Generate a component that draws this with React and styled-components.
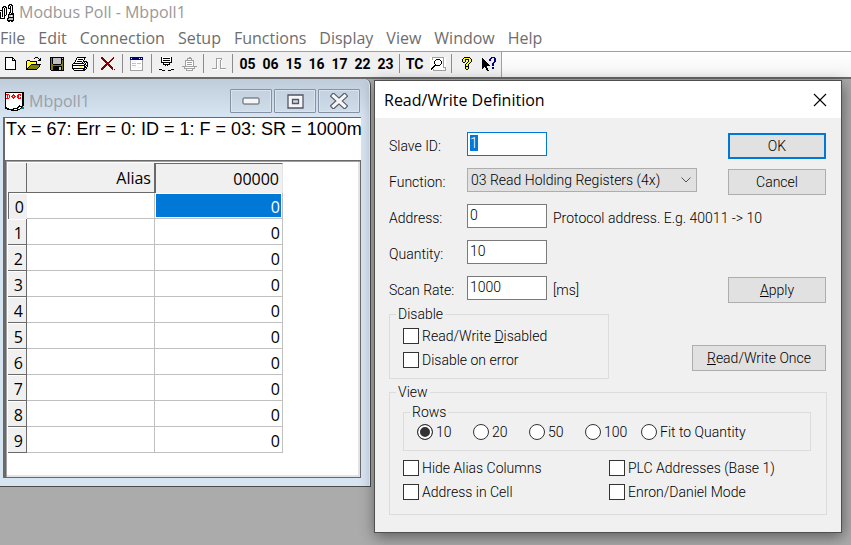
import React, { useState } from 'react'
import styled, { createGlobalStyle, css } from 'styled-components'

const GlobalStyle = createGlobalStyle`
    * {
        box-sizing: border-box;
    }
    body {
        margin: 0;
        font-family: "Open Sans", "Noto Sans", sans-serif;
        font-size: 16px;
        color: #000;
    }
    button, input, select {
        font: inherit;
        color: inherit;
    }
`

const Page = styled.div`
    display: flex;
    flex-direction: column;
    min-height: 100vh;
    background: #fff;
    overflow: hidden;
`

const TitleBar = styled.header`
    display: flex;
    align-items: center;
    gap: 5px;
    height: 25px;
    color: #999;
`

const AppTitle = styled.h1`
    margin: 0;
    font-size: 16px;
    font-weight: 400;
    line-height: 22px;
    padding-bottom: 2px;
`

const MenuBar = styled.nav`
    display: flex;
    gap: 13px;
    height: 26px;
`

const MenuItem = styled.button`
    padding: 0;
    border: 0;
    background: none;
    color: #6d6d6d;
    line-height: 26px;
`

const ToolStrip = styled.div`
    display: flex;
    border-top: 1px solid #a0a0a0;
    background: linear-gradient(#fff, #f4f4f4);
`

const Toolbar = styled.div`
    display: flex;
    align-items: center;
    height: 25px;
    margin-left: -1px;
    padding-bottom: 2px;
    border-right: 1px solid #a0a0a0;
    background: #f0f0f0;
`

const ToolButton = styled.button`
    display: flex;
    align-items: center;
    justify-content: center;
    width: 23px;
    height: 22px;
    padding: 0;
    border: 0;
    background: none;
    font-family: Roboto, sans-serif;
    font-size: 14px;
    font-weight: 700;
`

const Separator = styled.span`
    width: 1px;
    height: 19px;
    margin: 0 3px 0 2px;
    background: #8c8c8c;
`

const Workspace = styled.main`
    position: relative;
    flex: 1;
    border-top: 2px solid #696969;
    background: #ababab;
`

const ChildWindow = styled.section`
    position: absolute;
    left: 0;
    top: 0;
    width: 371px;
    padding: 0 9px 8px 3px;
    border: solid #4c4c4c;
    border-width: 0 1px 1px 0;
    border-radius: 0 6px 0 0;
    background: linear-gradient(#bfcddb, #d7e4f2 38px);
    box-shadow: inset -1px 0 0 #eef4fa;
`

const ChildTitleBar = styled.div`
    display: flex;
    align-items: center;
    height: 38px;
    padding: 6px 1px 0 2px;
`

const ChildTitle = styled.h2`
    flex: 1;
    margin: 0 0 0 5px;
    font-size: 16px;
    font-weight: 400;
    color: #98a1aa;
`

const CaptionButtons = styled.div`
    display: flex;
    gap: 2px;
`

const CaptionButton = styled.button`
    display: flex;
    align-items: center;
    justify-content: center;
    width: 42px;
    height: 24px;
    padding: 0;
    border: 1px solid #8592a3;
    border-radius: 1px;
    background: linear-gradient(#c3d1e0, #cfdcea);
    box-shadow: inset 0 0 0 1px #d9e4ef;
`

const ChildClient = styled.div`
    border: solid #696969;
    border-width: 1px 0 1px 2px;
    background: #fff;
`

const StatusLine = styled.p`
    height: 42px;
    margin: 0;
    padding-left: 1px;
    font-family: "Liberation Sans", Arial, sans-serif;
    font-size: 18px;
    line-height: 22px;
    white-space: nowrap;
`

const GridFrame = styled.div`
    height: 317px;
    padding: 2px 0 0 2px;
    border: solid #696969;
    border-width: 1px 1px 0 1px;
    box-shadow: inset 1px 1px 0 #a0a0a0, inset -2px -2px 0 #e3e3e3;
`

const Registers = styled.table`
    width: 275px;
    table-layout: fixed;
    border-collapse: separate;
    border-spacing: 0;
    text-align: right;
`

const Col = styled.col`
    width: ${(props) => props.$width}px;
`

const HeadCell = styled.th`
    height: 30px;
    padding: 0 3px;
    border: solid #696969;
    border-width: 0 1px 1px 0;
    background: #f0f0f0;
    font-weight: 400;
    line-height: 24px;
    ${(props) => props.$active && css`
        border-width: 1px 0 0 1px;
        border-right: 1px solid #e3e3e3;
    `}
`

const RowHead = styled.th`
    height: 26px;
    padding: 2px 3px 0 0;
    border: solid #696969;
    border-width: 0 1px 1px 0;
    background: #f0f0f0;
    box-shadow: inset 0 1px 0 #fff;
    font-weight: 400;
    line-height: 22px;
    ${(props) => props.$active && css`
        border-width: 0 0 0 1px;
    `}
`

const Cell = styled.td`
    height: 26px;
    padding: 2px 2px 0;
    border: solid #c0c0c0;
    border-width: 0 1px 1px 0;
    line-height: 22px;
    ${(props) => props.$selected && css`
        background: #0078d7;
        box-shadow: inset 0 0 0 1px #fff;
        color: #fff;
    `}
`

const Dialog = styled.section`
    position: absolute;
    left: 374px;
    top: 1px;
    width: 468px;
    border: 1px solid #4f4f4f;
    background: #f0f0f0;
    box-shadow: 1px 4px 14px rgba(0, 0, 0, 0.45);
`

const DialogTitleBar = styled.div`
    display: flex;
    align-items: center;
    justify-content: space-between;
    height: 37px;
    padding: 0 14px 0 9px;
    background: #fff;
`

const DialogTitle = styled.h2`
    margin: 0;
    font-size: 16px;
    font-weight: 400;
`

const CloseButton = styled.button`
    display: flex;
    padding: 0;
    border: 0;
    background: none;
`

const DialogBody = styled.form`
    padding: 8px 14px 17px;
    font-family: Roboto, sans-serif;
    font-size: 14px;
    font-weight: 300;
    line-height: 16px;
`

const FormRow = styled.div`
    display: flex;
    align-items: center;
    height: 36px;
`

const FieldLabel = styled.label`
    width: 78px;
    padding-top: 4px;
`

const TextBox = styled.input`
    width: 80px;
    height: 24px;
    padding: 0 2px 3px;
    border: 1px solid #7a7a7a;
    background: #fff;
    outline: 0;
    &:focus {
        border-color: #0078d7;
    }
    &::selection {
        background: #0078d7;
        color: #fff;
    }
`

const SelectBox = styled.div`
    display: grid;
    align-items: center;
    width: 230px;
    height: 24px;
    border: 1px solid #adadad;
    background: #e1e1e1;
    > * {
        grid-area: 1 / 1;
    }
    svg {
        justify-self: end;
        margin-right: 5px;
        pointer-events: none;
    }
`

const Select = styled.select`
    appearance: none;
    width: 100%;
    padding: 0 3px;
    border: 0;
    background: none;
    outline: 0;
`

const Note = styled.span`
    padding: 4px 0 0 6px;
`

const PushButton = styled.button`
    width: ${(props) => (props.$wide ? 134 : 98)}px;
    height: 26px;
    margin: 4px 1px 0 auto;
    padding: 0;
    border: ${(props) => (props.$primary ? '2px solid #0078d7' : '1px solid #adadad')};
    background: #e1e1e1;
`

const DisableRow = styled.div`
    display: flex;
    align-items: flex-end;
    margin-bottom: 5px;
`

const ButtonSlot = styled.div`
    margin-left: auto;
    padding-bottom: 8px;
`

const Group = styled.fieldset`
    width: ${(props) => props.$width || 'auto'};
    min-width: 0;
    margin: 0;
    padding: 0;
    border: 1px solid #dcdcdc;
`

const Legend = styled.legend`
    height: 16px;
    margin-left: 6px;
    padding: 0 2px;
`

const GroupBody = styled.div`
    padding: ${(props) => props.$padding};
`

const Radios = styled.div`
    display: grid;
    grid-template-columns: repeat(4, 56px) 1fr;
    padding: 0 13px 6px;
`

const Checks = styled.div`
    display: grid;
    grid-template-columns: ${(props) => (props.$columns === 2 ? '206px 1fr' : '1fr')};
    padding-top: ${(props) => (props.$columns === 2 ? 5 : 0)}px;
`

const Choice = styled.label`
    display: flex;
    align-items: center;
    gap: 3px;
    height: 24px;
    white-space: nowrap;
`

const CheckBox = styled.input`
    appearance: none;
    width: 16px;
    height: 16px;
    margin: 0;
    border: 1px solid #333;
    background: #fff;
    &:checked {
        box-shadow: inset 0 0 0 3px #fff;
        background: #333;
    }
`

const Radio = styled(CheckBox)`
    border-radius: 50%;
    &:checked {
        box-shadow: inset 0 0 0 2px #fff;
    }
`

const palette = {
    k: '#000', w: '#fff', y: '#ffff00', o: '#808000', g: '#c0c0c0', d: '#a0a0a0',
    r: '#800000', R: '#ff0000', b: '#000080', t: '#008080', l: '#f0f0f0',
}

const PixelIcon = ({ rows }) => {
    const width = Math.max(...rows.map((row) => row.length))
    return (
        <svg width={width} height={rows.length} shapeRendering="crispEdges" aria-hidden="true">
            {rows.map((row, y) => [...row].map((c, x) => (
                palette[c] && <rect key={`${x}-${y}`} x={x} y={y} width="1" height="1" fill={palette[c]} />
            )))}
        </svg>
    )
}

const icons = {
    app: [
        '.........kkk..',
        '........kkwkk.',
        '...kkk..kwkwk.',
        '..kkwkk.kwkwk.',
        '..kwkwk.kkkwk.',
        '..kwkwk...kwk.',
        'kkkwkwk...kwk.',
        'wwkwkwk...kwk.',
        'kwkwkwk..kkwk.',
        'kwkwkwk..kwkkk',
        'kwkwkwk.kkkkkk',
        'kwkwkk..kggwgk',
        'kwkwk...kggwgk',
        'kwwwk...kkkkkk',
        'kkkkk..kkggggk',
        '.......kgggggk',
        '.......kkkkkkk',
        '........kk.kk.',
    ],
    doc: [
        'kkkkkkkkkkkkkkkkkkk',
        'kwwwwwwwwwwwwwwwwkk',
        'kRRRwwwwRwwwwRRRwkk',
        'kwRwRwwRRRwwRRwRwkk',
        'kwRwRwRRwRRwRRwwwkk',
        'kwRwRwwRRRwwRRwRwkk',
        'kRRRwwwwRwwwwRRRwkk',
        'kwwwwwwwwwwwwwwwwkk',
        'kwwwwwwwwwwwwwwwwkk',
        'kwwwwwwwwwwwwwwwwkk',
        'kwwwwwwwwwwwwwwwwkk',
        'kwwwwwwwwwwwwwwwwkk',
        'kwwwwwwwwwwwwwwwwkk',
        'kwwwwwwwwwwwwwkwwkk',
        'kwwwwwwwwwwwwkkkkk.',
        'kkwwwwwwwwwwkkwwktt',
        'kkkkwwwwkkkkkwwkttt',
        '..kkkkkkkwwwkkk....',
        '......kkkkkkk......',
    ],
    file: [
        'kkkkkkkk...',
        'kwwwwwwkk..',
        'kwwwwwwkwk.',
        'kwwwwwwkkkk',
        'kwwwwwwwwwk',
        'kwwwwwwwwwk',
        'kwwwwwwwwwk',
        'kwwwwwwwwwk',
        'kwwwwwwwwwk',
        'kwwwwwwwwwk',
        'kwwwwwwwwwk',
        'kwwwwwwwwwk',
        'kkkkkkkkkkk',
    ],
    open: [
        '.........kkk....',
        '........k...k.k.',
        '.............kk.',
        '.kkk........kkk.',
        'kywykkkkkkk.....',
        'kwywywywywk.....',
        'kywywywywyk.....',
        'kwywykkkkkkkkkk.',
        'kywykooooooook..',
        'kwykoooooooook..',
        'kykoooooooook...',
        'kkoooooooook....',
        'kkkkkkkkkkk.....',
    ],
    save: [
        'kkkkkkkkkkkkkk',
        'kokggggggggkgk',
        'kokggggggggkkk',
        'kokggggggggkok',
        'kokggggggggkok',
        'kokggggggggkok',
        'kokggggggggkok',
        'kookkkkkkkkook',
        'kooooooooooook',
        'kookkkkkkkkkok',
        'kookkkkkkggkok',
        'kookkkkkkggkok',
        'kookkkkkkggkok',
        '.kkkkkkkkkkkkk',
    ],
    print: [
        '.....kkkkkkkkk..',
        '....kwwwwwwwk...',
        '....kwkkkkkwk...',
        '...kwwwwwwwk....',
        '...kwkkkkkwkkkk.',
        '..kwwwwwwwkwkwkk',
        '.kkkkkkkkkkkwkwk',
        'kwwwwwwwwwwwkkwk',
        'kkkkkkkkkkkkkwkk',
        'kwwwwwwyywwwkkwk',
        'kwwwwwwwwwwwkkk.',
        'kkkkkkkkkkkkkwk.',
        '.kwwwwwwwwwkkk..',
        '..kkkkkkkkkkk...',
    ],
    cut: [
        'rr..........r..',
        'rrr........rr..',
        '.rrr......rr...',
        '..rrr....rr....',
        '...rrr..rr.....',
        '....rrrrr......',
        '.....rrr.......',
        '....rrrrr......',
        '...rrr.rrr.....',
        '..rrr...rrr....',
        '.rrr.....rrr...',
        'rrr.......rr...',
        'rr.........r.r.',
    ],
    window: [
        'bbbbbbbbbbbbb..',
        'bwbbbbbbbwbwb..',
        'bbbbbbbbbbbbb..',
        'dwwwwwwwwwwwd..',
        'dwllllwwwwwwd..',
        'dwwwwwwwwwwwd..',
        'dwggggwggggwd..',
        'dwwwwwwwwwwwd..',
        'dwggggwwwwwwd..',
        'dwwwwwwwwwwwd..',
        'dwllllwllllwd..',
        'dwwwwwwwwwwwd..',
        'dwwwwwwwwwwwd..',
        'ddddddddddddd..',
    ],
    connect: [
        '..kwwwwwwwwwk..',
        '..kwkkkkkkkwk..',
        '..kwwwwwwwwwk..',
        '..kwkkkkkkkwk..',
        '..kwwwwwwwwwk..',
        '..kkkkkkkkkkk..',
        '....kwwwwwk....',
        '....kkkkkkk....',
        '......kwk......',
        '...............',
        '...............',
        'www.........www',
        'kkkw.......wkkk',
        '...kkk...kkk...',
    ],
    disconnect: [
        '.......dd......',
        '.....ddddd.....',
        '.....dwwwd.....',
        '...ddddddddd...',
        '...dwwwwwwwd...',
        '...dwdddddwd...',
        '...dwwwwwwwd...',
        '...dwdddddwd...',
        '...dwwwwwwwd...',
        'ddddddddddddddd',
        '..dwwwwwwwwwd..',
        '..ddddddddddd..',
        '....dwwwwwd....',
        '....ddddddd....',
    ],
    pulse: [
        '....dddddd....',
        '....dwwwwd....',
        '....dw..dw....',
        '....dw..dw....',
        '....dw..dw....',
        '....dw..dw....',
        '....dw..dw....',
        '....dw..dw....',
        '....dw..dw....',
        '....dw..dw....',
        'dddddw..dddddd',
        '.wwwww...wwwww',
    ],
    monitor: [
        'wwddddddddddddww',
        'wwdwwwwwwwwwwdww',
        'wwdwwwkkkkwwwdww',
        'wwwwwkwwwwkwwdww',
        'wwwwkwwwwwwkwdww',
        'wwwwkwwwwwwkwdww',
        'wwwwkwwwwwwkwdww',
        'wwwwwkwwwwkwwdww',
        'wwwwkkkkkkwwwdww',
        'wwwkkwwwwwwwwdww',
        'wwkkwwwwwwwwwddd',
        'wkkwwwwwwwwwwwwd',
        'wkwdwwwwwwwwwwwd',
        'wwwddddddddddddd',
    ],
    about: [
        '..kkkkkk..',
        '.kyyyyyyk.',
        'kyykkkkyyk',
        'kyyk..kyyk',
        'kyyk..kyyk',
        '.kk..kyyk.',
        '....kyyk..',
        '...kyyk...',
        '...kyyk...',
        '...kkkk...',
        '...kyyk...',
        '...kyyk...',
        '....kk....',
    ],
    help: [
        '.........bbbb..',
        'k.......bb..bb.',
        'kk.....bb...bb.',
        'kkk....bb...bb.',
        'kkkk........bb.',
        'kkkkk......bb..',
        'kkkkkk....bb...',
        'kkkkkkk...bb...',
        'kkkkkkkk..bb...',
        'kkkkk..........',
        'kk.kk.....bb...',
        'k...kk....bb...',
        '....kk.........',
        '.....kk........',
    ],
}

const menus = ['File', 'Edit', 'Connection', 'Setup', 'Functions', 'Display', 'View', 'Window', 'Help']

const tools = [
    [['New', 'file'], ['Open', 'open'], ['Save', 'save'], ['Print', 'print']],
    [['Delete', 'cut']],
    [['Definition', 'window']],
    [['Connect', 'connect'], ['Disconnect', 'disconnect']],
    [['Pulse', 'pulse']],
    [['05'], ['06'], ['15'], ['16'], ['17'], ['22'], ['23']],
    [['TC'], ['Monitor', 'monitor']],
    [['About', 'about'], ['Help', 'help']],
]

const rowOptions = ['10', '20', '50', '100', 'Fit to Quantity']

const MainToolbar = () => (
    <ToolStrip>
        <Toolbar role="toolbar">
            {tools.map((group, i) => (
                <React.Fragment key={i}>
                    {i > 0 && <Separator />}
                    {group.map(([name, icon]) => (
                        <ToolButton key={name} type="button" aria-label={name}>
                            {icon ? <PixelIcon rows={icons[icon]} /> : name}
                        </ToolButton>
                    ))}
                </React.Fragment>
            ))}
        </Toolbar>
    </ToolStrip>
)

const PollWindow = () => (
    <ChildWindow>
        <ChildTitleBar>
            <PixelIcon rows={icons.doc} />
            <ChildTitle>Mbpoll1</ChildTitle>
            <CaptionButtons>
                <CaptionButton type="button" aria-label="Minimize">
                    <svg width="18" height="8">
                        <rect x="1" y="1" width="16" height="6" rx="1" fill="#f6f6f6" stroke="#535666" />
                    </svg>
                </CaptionButton>
                <CaptionButton type="button" aria-label="Maximize">
                    <svg width="17" height="15" fillRule="evenodd">
                        <path d="M1 1h15v13H1zM5.500 5.500h6v4h-6z" fill="#f6f6f6" stroke="#535666" strokeWidth="1.300" />
                    </svg>
                </CaptionButton>
                <CaptionButton type="button" aria-label="Close">
                    <svg width="18" height="16" strokeLinecap="square">
                        <path d="M3.500 3l11 10M14.500 3l-11 10" stroke="#535666" strokeWidth="5.500" />
                        <path d="M3.500 3l11 10M14.500 3l-11 10" stroke="#f6f6f6" strokeWidth="3.300" />
                    </svg>
                </CaptionButton>
            </CaptionButtons>
        </ChildTitleBar>
        <ChildClient>
            <StatusLine>Tx = 67: Err = 0: ID = 1: F = 03: SR = 1000m</StatusLine>
            <GridFrame>
                <Registers>
                    <colgroup>
                        <Col $width={19} />
                        <Col $width={128} />
                        <Col $width={128} />
                    </colgroup>
                    <thead>
                        <tr>
                            <HeadCell />
                            <HeadCell>Alias</HeadCell>
                            <HeadCell $active>00000</HeadCell>
                        </tr>
                    </thead>
                    <tbody>
                        {Array.from({ length: 10 }, (_, i) => (
                            <tr key={i}>
                                <RowHead $active={i === 0}>{i}</RowHead>
                                <Cell />
                                <Cell $selected={i === 0}>0</Cell>
                            </tr>
                        ))}
                    </tbody>
                </Registers>
            </GridFrame>
        </ChildClient>
    </ChildWindow>
)

const DefinitionDialog = () => {
    const [rows, setRows] = useState('10')

    return (
        <Dialog role="dialog" aria-labelledby="definition-title">
            <DialogTitleBar>
                <DialogTitle id="definition-title">Read/Write Definition</DialogTitle>
                <CloseButton type="button" aria-label="Close">
                    <svg width="14" height="14" stroke="#000" strokeWidth="1.100">
                        <path d="M1 1l12 12M13 1L1 13" />
                    </svg>
                </CloseButton>
            </DialogTitleBar>
            <DialogBody onSubmit={(e) => e.preventDefault()}>
                <FormRow>
                    <FieldLabel htmlFor="slave">Slave ID:</FieldLabel>
                    <TextBox id="slave" defaultValue="1" autoFocus onFocus={(e) => e.target.select()} />
                    <PushButton $primary>OK</PushButton>
                </FormRow>
                <FormRow>
                    <FieldLabel htmlFor="function">Function:</FieldLabel>
                    <SelectBox>
                        <Select id="function">
                            <option>03 Read Holding Registers (4x)</option>
                        </Select>
                        <svg width="10" height="6" fill="none" stroke="#555">
                            <path d="M0.500 0.500L5 5l4.500-4.500" />
                        </svg>
                    </SelectBox>
                    <PushButton type="button">Cancel</PushButton>
                </FormRow>
                <FormRow>
                    <FieldLabel htmlFor="address">Address:</FieldLabel>
                    <TextBox id="address" defaultValue="0" />
                    <Note>Protocol address. E.g. 40011 -&gt; 10</Note>
                </FormRow>
                <FormRow>
                    <FieldLabel htmlFor="quantity">Quantity:</FieldLabel>
                    <TextBox id="quantity" defaultValue="10" />
                </FormRow>
                <FormRow>
                    <FieldLabel htmlFor="rate">Scan Rate:</FieldLabel>
                    <TextBox id="rate" defaultValue="1000" />
                    <Note>[ms]</Note>
                    <PushButton type="button"><u>A</u>pply</PushButton>
                </FormRow>
                <DisableRow>
                    <Group $width="220px">
                        <Legend>Disable</Legend>
                        <GroupBody $padding="2px 13px 6px">
                            <Checks>
                                <Choice><CheckBox type="checkbox" /><span>Read/Write <u>D</u>isabled</span></Choice>
                                <Choice><CheckBox type="checkbox" />Disable on error</Choice>
                            </Checks>
                        </GroupBody>
                    </Group>
                    <ButtonSlot>
                        <PushButton type="button" $wide><u>R</u>ead/Write Once</PushButton>
                    </ButtonSlot>
                </DisableRow>
                <Group>
                    <Legend>View</Legend>
                    <GroupBody $padding="4px 15px 10px 13px">
                        <Group>
                            <Legend>Rows</Legend>
                            <Radios>
                                {rowOptions.map((option) => (
                                    <Choice key={option}>
                                        <Radio
                                            type="radio"
                                            name="rows"
                                            checked={rows === option}
                                            onChange={() => setRows(option)}
                                        />
                                        {option}
                                    </Choice>
                                ))}
                            </Radios>
                        </Group>
                        <Checks $columns={2}>
                            <Choice><CheckBox type="checkbox" />Hide Alias Columns</Choice>
                            <Choice><CheckBox type="checkbox" />PLC Addresses (Base 1)</Choice>
                            <Choice><CheckBox type="checkbox" />Address in Cell</Choice>
                            <Choice><CheckBox type="checkbox" />Enron/Daniel Mode</Choice>
                        </Checks>
                    </GroupBody>
                </Group>
            </DialogBody>
        </Dialog>
    )
}

const App = () => {
    return (
        <Page>
            <GlobalStyle />
            <TitleBar>
                <PixelIcon rows={icons.app} />
                <AppTitle>Modbus Poll - Mbpoll1</AppTitle>
            </TitleBar>
            <MenuBar>
                {menus.map((menu) => <MenuItem key={menu} type="button">{menu}</MenuItem>)}
            </MenuBar>
            <MainToolbar />
            <Workspace>
                <PollWindow />
                <DefinitionDialog />
            </Workspace>
        </Page>
    )
}

export default App
